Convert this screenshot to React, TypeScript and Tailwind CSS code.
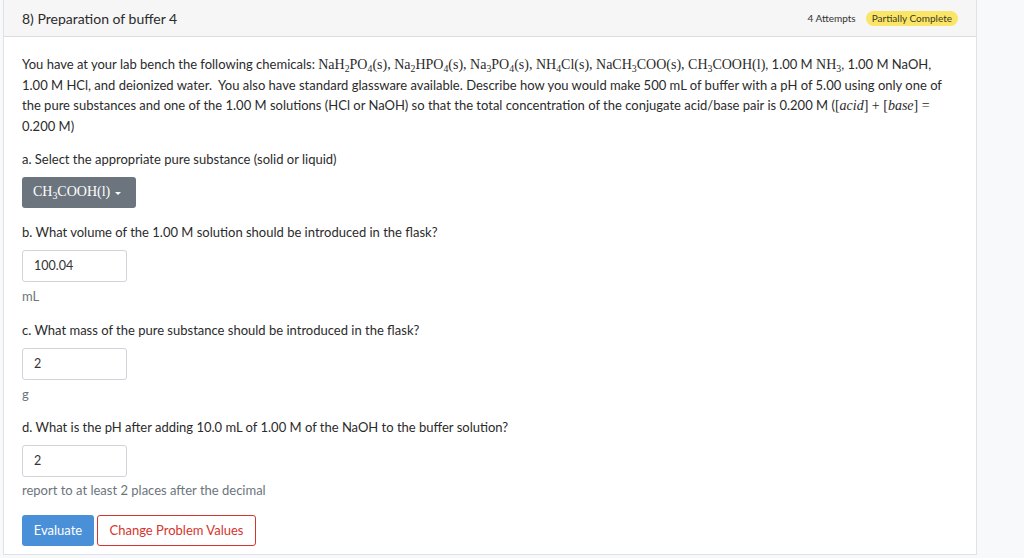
import React from "react";

const Sub = ({ children }: { children: React.ReactNode }) => (
  <sub className="text-[0.7em] relative top-[0.3em]">{children}</sub>
);

const M = ({ children }: { children: React.ReactNode }) => (
  <span className="font-['Liberation_Serif',serif] text-[14px] leading-[0]">{children}</span>
);

function Input({ value }: { value: string }) {
  return (
    <div className="mt-2 w-[105px] h-[32px] border border-[#ced4da] rounded-[3px] bg-white flex items-center px-[11px] text-[12.5px] text-[#333]">
      {value}
    </div>
  );
}

export default function App() {
  return (
    <div className="w-[1024px] h-[558px] bg-[#f8f9fa] flex font-['Lato',sans-serif] text-[#2b2b2b] overflow-hidden">
      <div className="ml-[3px] w-[974px] h-[555px] bg-white border-l border-r border-b border-[#dee2e6] flex flex-col">
        <div className="h-[37px] shrink-0 bg-[#f6f6f6] border-b border-[#dcdcdc] flex items-center pl-[18px] pr-[18px]">
          <span className="text-[14px] text-[#2b2b2b]">8) Preparation of buffer 4</span>
          <span className="ml-auto text-[10px] text-[#333]">4 Attempts</span>
          <span className="ml-[10px] h-[15px] px-[6px] rounded-full bg-[#fbe566] text-[10px] text-[#3a3a2a] flex items-center">
            Partially Complete
          </span>
        </div>
        <div className="pl-[18px] pr-[19px] pt-[17px] text-[13px] leading-[20.5px]">
          <div>
            <div className="whitespace-nowrap">
              You have at your lab bench the following chemicals:{" "}
              <M>NaH<Sub>2</Sub>PO<Sub>4</Sub>(s), Na<Sub>2</Sub>HPO<Sub>4</Sub>(s), Na<Sub>3</Sub>PO<Sub>4</Sub>(s), NH<Sub>4</Sub>Cl(s), NaCH<Sub>3</Sub>COO(s), CH<Sub>3</Sub>COOH(l)</M>, 1.00 M{" "}
              <M>NH<Sub>3</Sub></M>, 1.00 M NaOH,
            </div>
            <div className="whitespace-nowrap">
              1.00 M HCl, and deionized water.&nbsp; You also have standard glassware available. Describe how you would make 500 mL of buffer with a pH of 5.00 using only one of
            </div>
            <div className="whitespace-nowrap">
              the pure substances and one of the 1.00 M solutions (HCl or NaOH) so that the total concentration of the conjugate acid/base pair is 0.200 M (
              <M>[<i>acid</i>] + [<i>base</i>] =</M>
            </div>
            <div>0.200 M)</div>
          </div>

          <div className="mt-[13px] leading-[20px]">
            <div>a. Select the appropriate pure substance (solid or liquid)</div>
            <div className="mt-2 w-[114px] h-[31px] rounded-[3px] bg-[#6c757d] text-white flex items-center pl-[11px]">
              <M>CH<Sub>3</Sub>COOH(l)</M>
              <svg width="8" height="6" viewBox="0 0 8 6" className="ml-[4px]">
                <path d="M1 2 L7 2 L4 5 Z" fill="white" />
              </svg>
            </div>
          </div>

          <div className="mt-[14px] leading-[20px]">
            <div>b. What volume of the 1.00 M solution should be introduced in the flask?</div>
            <Input value="100.04" />
            <div className="mt-[4px] text-[#6c757d]">mL</div>
          </div>

          <div className="mt-[14px] leading-[20px]">
            <div>c. What mass of the pure substance should be introduced in the flask?</div>
            <Input value="2" />
            <div className="mt-[4px] text-[#6c757d]">g</div>
          </div>

          <div className="mt-[13px] leading-[20px]">
            <div>d. What is the pH after adding 10.0 mL of 1.00 M of the NaOH to the buffer solution?</div>
            <Input value="2" />
            <div className="mt-[3px] text-[#6c757d]">report to at least 2 places after the decimal</div>
          </div>

          <div className="mt-[15px] flex gap-[3px]">
            <button className="h-[31px] w-[72px] rounded-[3px] bg-[#4a90d9] text-white text-[13px]">Evaluate</button>
            <button className="h-[31px] w-[159px] rounded-[3px] border border-[#d4352c] text-[#d4352c] text-[13px] bg-white">
              Change Problem Values
            </button>
          </div>
        </div>
      </div>
    </div>
  );
}
